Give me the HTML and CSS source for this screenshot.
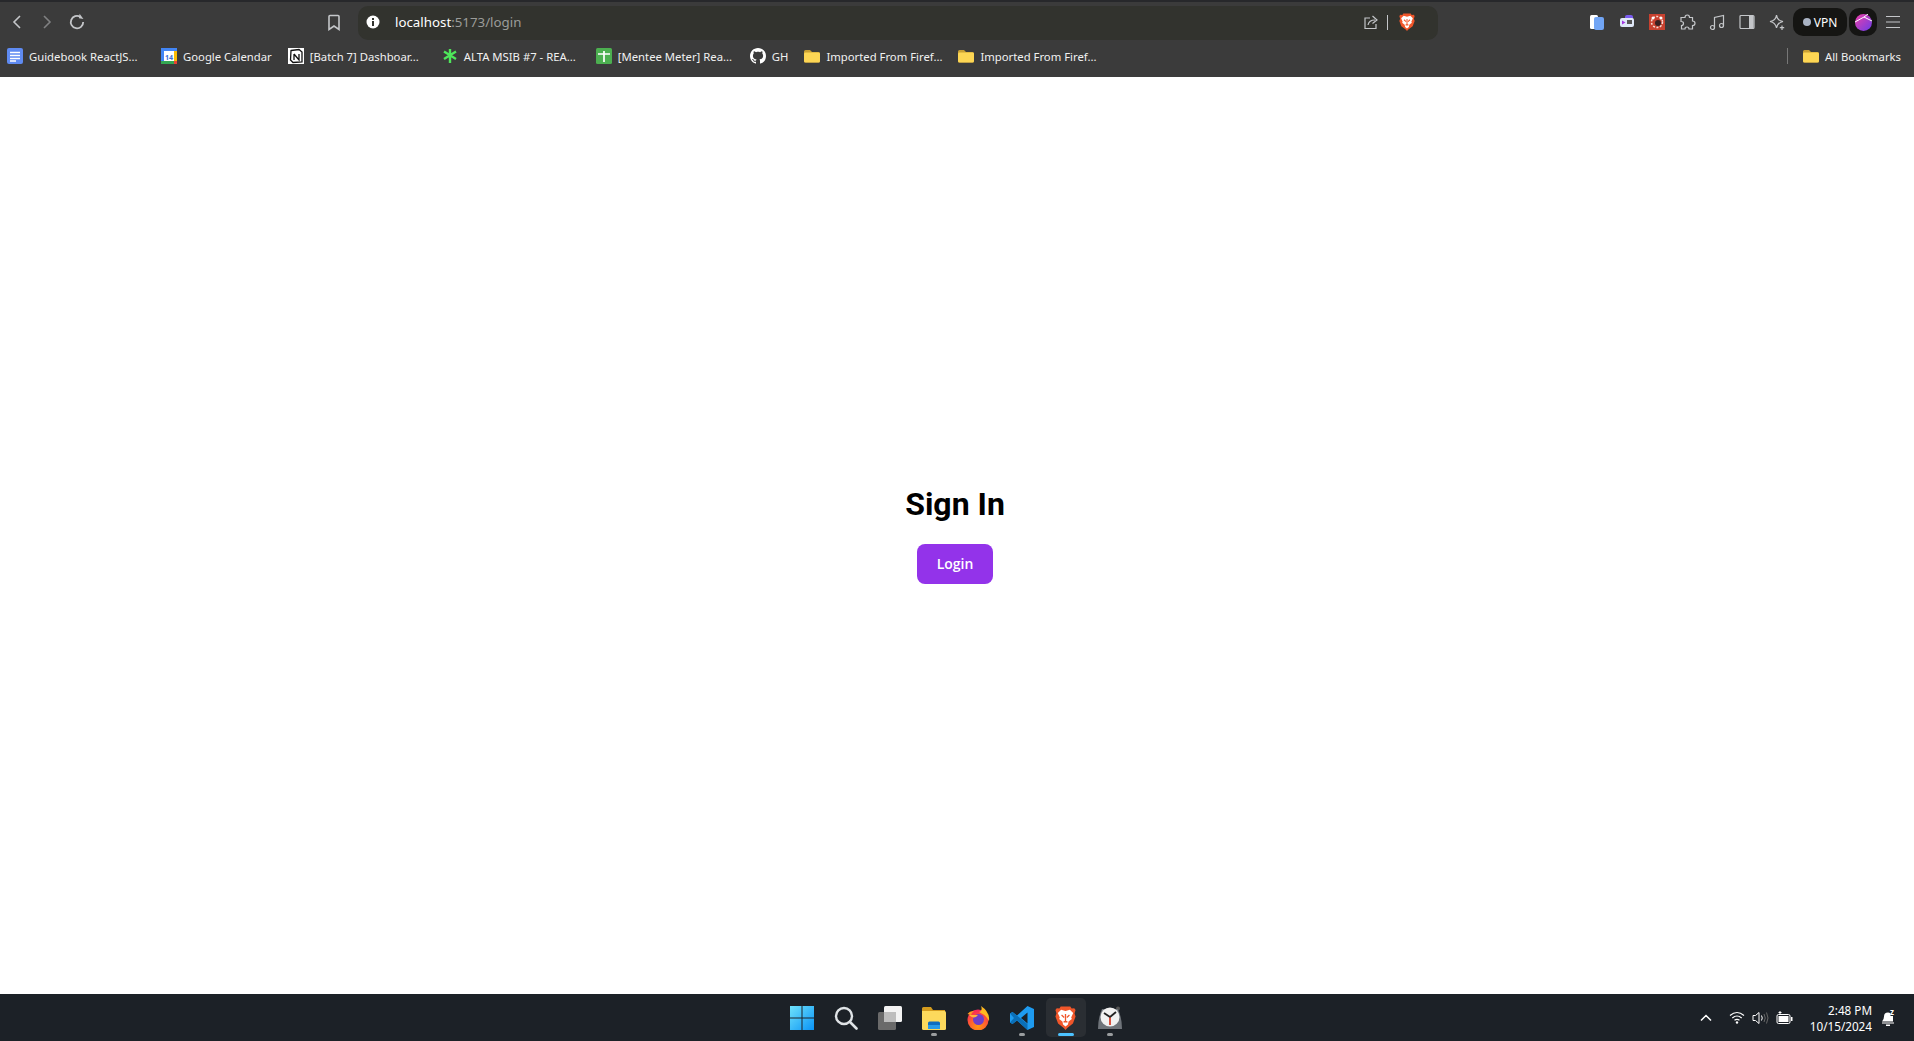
FILE: index.html
```html
<!DOCTYPE html>
<html>
<head>
	<meta charset="utf-8">
	<title>localhost:5173/login</title>
	<link rel="stylesheet" href="styles.css">
</head>
<body>

	<svg class="defs" width="0" height="0">
		<defs>
			<symbol id="folder" viewBox="0 0 16 16">
				<path d="M0 3.500Q0 2 1.500 2H6L8 4H14.500Q16 4 16 5.500V13Q16 14.500 14.500 14.500H1.500Q0 14.500 0 13Z" fill="#c9a033"/>
				<path d="M0 6Q0 4.600 1.500 4.600H14.500Q16 4.600 16 6V13Q16 14.500 14.500 14.500H1.500Q0 14.500 0 13Z" fill="#fdd654"/>
			</symbol>
			<symbol id="brave" viewBox="0 0 24 24" preserveAspectRatio="none">
				<path d="M6.500 .5H17.500L19 2.500L22 2.200L23.500 4L22.300 7.500L23.500 10.500L20.500 17.500L14 22L12 24L10 22L3.500 17.500L.5 10.500L1.700 7.500L.5 4L2 2.200L5 2.500Z" fill="#f0562a"/>
				<path d="M7 3.800L12 5L17 3.800L20.800 7L18.500 11.500L19.300 13L15.500 15.500L14.800 18.500L12 20.500L9.200 18.500L8.500 15.500L4.700 13L5.500 11.500L3.200 7Z" fill="#fff"/>
				<path d="M12 8V15.500M7.500 9L10.500 11.500M16.500 9L13.500 11.500M9.800 16L12 15.500L14.200 16" stroke="#f0562a" stroke-width="1.500" fill="none"/>
			</symbol>
		</defs>
	</svg>

	<header class="browser">
		<div class="toolbar">
			<button class="tool"><svg width="12" height="16" viewBox="0 0 12 16"><path d="M9 2L3 8L9 14" class="line"/></svg></button>
			<button class="tool dim"><svg width="12" height="16" viewBox="0 0 12 16"><path d="M3 2L9 8L3 14" class="line"/></svg></button>
			<button class="tool"><svg width="18" height="18" viewBox="0 0 16 16"><path d="M13.500 8A5.500 5.500 0 1 1 11 3.500" class="line"/><path d="M10 1V5H14Z" fill="#c4c6c9" transform="rotate(8 12 3)"/></svg></button>

			<button class="tool bookmark"><svg width="14" height="17" viewBox="0 0 14 17"><path d="M2 2.500Q2 1.500 3 1.500H11Q12 1.500 12 2.500V15.500L7 12L2 15.500Z" class="line"/></svg></button>

			<div class="omnibox">
				<svg class="info" width="14" height="14" viewBox="0 0 14 14"><circle cx="7" cy="7" r="6.500" fill="#fff"/><rect x="6" y="6" width="2" height="5" fill="#32332e"/><rect x="6" y="3" width="2" height="2" fill="#32332e"/></svg>
				<span class="url">localhost<span class="url-rest">:5173/login</span></span>
				<div class="omni-actions">
					<svg width="16" height="16" viewBox="0 0 16 16"><path d="M7 4H2V14.500H13V10" class="line thin"/><path d="M5 11Q6 6 12 6M9.500 2L14 6L9.500 9.500" class="line thin"/></svg>
					<span class="omni-sep"></span>
					<svg class="omni-brave" width="16" height="18"><use href="#brave" width="100%" height="100%"/></svg>
				</div>
			</div>

			<div class="extensions">
				<button class="tool ext"><svg width="16" height="16" viewBox="0 0 16 16"><rect x="1" y="1" width="8" height="14" rx="1.500" fill="#fff"/><rect x="5" y="3" width="10" height="13" rx="2" fill="#71a5f5"/></svg></button>
				<button class="tool ext"><svg width="16" height="16" viewBox="0 0 16 16"><rect x="6" y="1" width="8" height="10" rx="2" fill="#7a5bf0"/><rect x="1" y="4" width="14" height="9" rx="2" fill="#dfe8f8"/><path d="M3 6.500L6.500 8.500L3 10.500Z" fill="#a236e0"/><rect x="8" y="6" width="5" height="4" fill="#555"/></svg></button>
				<button class="tool ext"><svg width="16" height="16" viewBox="0 0 16 16"><rect width="16" height="16" fill="#c8412f"/><circle cx="8" cy="8" r="5.500" fill="none" stroke="#f6dcd6" stroke-width="1.500" stroke-dasharray="2 1.500"/><circle cx="9" cy="9" r="3" fill="#3a2020"/><circle cx="4" cy="4" r="1.500" fill="#fff"/><circle cx="12" cy="4" r="1.500" fill="#fff"/></svg></button>
				<button class="tool ext"><svg width="17" height="17" viewBox="0 0 17 17"><path d="M6 3.500Q6 1 8.300 1Q10.500 1 10.500 3.500H13.500V7Q16 7 16 9.200Q16 11.500 13.500 11.500V15H10Q10 13 8 13Q6 13 6 15H2.500V11.500Q4.500 11.500 4.500 9.500Q4.500 7.500 2 7.500V3.500Z" class="line thin"/></svg></button>
				<button class="tool ext"><svg width="16" height="17" viewBox="0 0 16 17"><path d="M5.500 13.500V3.500L14.500 1.500V11.500" class="line thin"/><circle cx="3.500" cy="13.500" r="2" class="line thin"/><circle cx="12.500" cy="11.500" r="2" class="line thin"/></svg></button>
				<button class="tool ext"><svg width="16" height="16" viewBox="0 0 16 16"><rect x="1" y="1.500" width="14" height="13" rx="1" class="line thin"/><rect x="10" y="2" width="4.500" height="12" fill="#c4c6c9"/></svg></button>
				<button class="tool ext"><svg width="16" height="17" viewBox="0 0 16 17"><path d="M7.500 1Q8 6.500 14 7.500Q8.500 8.500 7.500 14Q6.500 8.500 1 7.500Q7 6.500 7.500 1Z" class="line thin"/><path d="M13 11.500V16M10.800 13.700H15.200" class="line thin"/></svg></button>
				<div class="vpn"><span class="vpn-dot"></span>VPN</div>
				<div class="profile"><svg width="17" height="17" viewBox="0 0 17 17"><defs><linearGradient id="profile-fill" x1="0" y1="0" x2="1" y2="1"><stop offset="0" stop-color="#ef3fa8"/><stop offset="1" stop-color="#6a3de8"/></linearGradient></defs><circle cx="8.500" cy="8.500" r="8.500" fill="url(#profile-fill)"/><path d="M0 8L9 3L17 7M9 3L13 0" stroke="#fff" stroke-width="1" fill="none"/></svg></div>
				<button class="tool menu"><svg width="16" height="14" viewBox="0 0 16 14"><path d="M1 1.500H15M1 7H15M1 12.500H15" class="line thin"/></svg></button>
			</div>
		</div>

		<nav class="bookmarks">
			<a class="mark long">
				<svg width="16" height="16" viewBox="0 0 16 16"><rect width="16" height="16" rx="2" fill="#5f8bf2"/><path d="M3 4.500H13M3 7.500H13M3 10.500H13M3 13H9" stroke="#fff" stroke-width="1.300"/></svg>
				Guidebook ReactJS...
			</a>
			<a class="mark">
				<svg width="16" height="16" viewBox="0 0 16 16"><rect width="16" height="16" rx="1.500" fill="#fff"/><rect width="16" height="3" fill="#4285f4"/><rect width="3" height="16" fill="#4285f4"/><rect x="13" y="3" width="3" height="10" fill="#fbbc04"/><rect y="13" width="13" height="3" fill="#34a853"/><rect x="13" y="13" width="3" height="3" fill="#ea4335"/><text x="8" y="12" class="cal-day">14</text></svg>
				Google Calendar
			</a>
			<a class="mark long">
				<svg width="16" height="16" viewBox="0 0 16 16"><rect width="16" height="16" fill="#fff"/><path d="M3 2.500L11 1.500L14 4V14L5 14.500L2.500 12Z" fill="#fff" stroke="#111" stroke-width="1.300"/><path d="M6 6V12M6 6L11 12V6" stroke="#111" stroke-width="1.300" fill="none"/></svg>
				[Batch 7] Dashboar...
			</a>
			<a class="mark long">
				<svg width="16" height="16" viewBox="0 0 16 16"><path d="M8 1V15M2 3.500L14 11M14 3.500L2 11" stroke="#4ee65a" stroke-width="2.400"/></svg>
				ALTA MSIB #7 - REA...
			</a>
			<a class="mark long">
				<svg width="16" height="16" viewBox="0 0 16 16"><rect width="16" height="16" rx="1.500" fill="#4caf50"/><path d="M2 6H14M8 3V14" stroke="#fff" stroke-width="1.700"/></svg>
				[Mentee Meter] Rea...
			</a>
			<a class="mark">
				<svg width="16" height="16" viewBox="0 0 16 16"><path d="M8 0C3.580 0 0 3.580 0 8c0 3.540 2.290 6.530 5.470 7.590.4.070.55-.17.55-.38 0-.19-.01-.82-.01-1.490-2.010.37-2.530-.49-2.690-.94-.09-.23-.48-.94-.82-1.130-.28-.15-.68-.52-.01-.53.63-.01 1.080.58 1.230.82.720 1.210 1.870.87 2.330.66.070-.52.280-.87.510-1.070-1.780-.2-3.640-.89-3.640-3.950 0-.87.310-1.590.820-2.150-.08-.2-.36-1.020.08-2.120 0 0 .67-.21 2.200.82.640-.18 1.320-.27 2-.27s1.360.09 2 .27c1.530-1.040 2.200-.82 2.200-.82.440 1.100.16 1.920.08 2.120.51.560.82 1.270.82 2.150 0 3.070-1.870 3.750-3.650 3.950.29.250.54.730.54 1.480 0 1.070-.01 1.930-.01 2.200 0 .21.150.46.550.38A8.010 8.010 0 0 0 16 8c0-4.420-3.580-8-8-8z" fill="#fff"/></svg>
				GH
			</a>
			<a class="mark long">
				<svg width="16" height="16"><use href="#folder"/></svg>
				Imported From Firef...
			</a>
			<a class="mark long">
				<svg width="16" height="16"><use href="#folder"/></svg>
				Imported From Firef...
			</a>
			<div class="marks-end">
				<span class="marks-sep"></span>
				<a class="mark">
					<svg width="16" height="16"><use href="#folder"/></svg>
					All Bookmarks
				</a>
			</div>
		</nav>
	</header>

	<main class="page">
		<h1>Sign In</h1>
		<button class="login">Login</button>
	</main>

	<footer class="taskbar">
		<div class="task-apps">
			<div class="app">
				<svg width="24" height="24" viewBox="0 0 24 24"><defs><linearGradient id="win-fill" x1="0" y1="0" x2="1" y2="1"><stop offset="0" stop-color="#6fe2fb"/><stop offset="1" stop-color="#0a93f5"/></linearGradient></defs><path d="M0 0H11.500V11.500H0ZM12.500 0H24V11.500H12.500ZM0 12.500H11.500V24H0ZM12.500 12.500H24V24H12.500Z" fill="url(#win-fill)"/></svg>
			</div>
			<div class="app">
				<svg width="24" height="24" viewBox="0 0 24 24"><circle cx="10" cy="10" r="8" fill="none" stroke="#dfe3e6" stroke-width="2.400"/><path d="M16 16L22.500 22.500" stroke="#dfe3e6" stroke-width="2.600" stroke-linecap="round"/></svg>
			</div>
			<div class="app">
				<svg width="24" height="24" viewBox="0 0 24 24"><rect x="0" y="6" width="18" height="18" rx="1.500" fill="#6a6a6a"/><rect x="6" y="0" width="18" height="16" rx="1.500" fill="#f3f3f3"/><rect x="6" y="6" width="12" height="10" fill="#bdbdbd"/></svg>
			</div>
			<div class="app running">
				<svg width="24" height="24" viewBox="0 0 24 24"><path d="M0 2.500Q0 1 1.500 1H9L11 4H23V8H0Z" fill="#d49c1e"/><path d="M0 5H22.500Q24 5 24 6.500V22.500Q24 24 22.500 24H1.500Q0 24 0 22.500Z" fill="#fcd95c"/><path d="M6 23V17Q6 15.500 7.500 15.500H16.500Q18 15.500 18 17V23Z" fill="#0f6dc0"/><rect x="6" y="19" width="12" height="4" fill="#2a9be8"/></svg>
			</div>
			<div class="app">
				<svg width="24" height="24" viewBox="0 0 24 24"><defs><radialGradient id="fox-fill" cx="0.500" cy="0.800" r="0.900"><stop offset="0" stop-color="#ff980e"/><stop offset="0.500" stop-color="#ff5634"/><stop offset="1" stop-color="#f5156c"/></radialGradient></defs><circle cx="12" cy="14" r="10.500" fill="url(#fox-fill)"/><path d="M15 0Q24 6 23 15Q20 9 13 6Q17 5 15 0Z" fill="#ffb820"/><path d="M1.500 8Q4 4.500 8 5Q5 7.500 5 9Z" fill="#ff9a1f"/><circle cx="12.500" cy="13.500" r="5.500" fill="#6f3fc8"/><path d="M3 9H12L10 11Q6 12.500 3 9Z" fill="#ffb43c"/></svg>
			</div>
			<div class="app running">
				<svg width="24" height="24" viewBox="0 0 24 24"><path d="M17.500 0L24 3V21L17.500 24L7 14.500L2.500 18L0 16.500V7.500L2.500 6L7 9.500ZM17.500 6.500L11 12L17.500 17.500Z" fill="#1e9bf0" fill-rule="evenodd"/><path d="M0 7.500L2.500 6L17.500 18V24L7 14.500L2.500 18L0 16.500L4 12Z" fill="#0a6fb8"/></svg>
			</div>
			<div class="app active">
				<svg width="21" height="24"><use href="#brave" width="100%" height="100%"/></svg>
			</div>
			<div class="app running">
				<svg width="24" height="24" viewBox="0 0 24 24"><circle cx="20" cy="2.500" r="2" fill="#555"/><path d="M4 3H20Q24 12 24 23H0Q0 12 4 3Z" fill="#6f747a"/><circle cx="12" cy="11" r="9.500" fill="#f1f1f1"/><path d="M12 11V19" stroke="#d8402c" stroke-width="1.800"/><path d="M12 11L18 6M12 11L6 7" stroke="#222" stroke-width="1.800"/></svg>
			</div>
		</div>

		<div class="tray">
			<svg class="tray-chevron" width="12" height="8" viewBox="0 0 12 8"><path d="M1 6.500L6 1.500L11 6.500" fill="none" stroke="#fff" stroke-width="1.500"/></svg>
			<svg class="tray-wifi" width="16" height="13" viewBox="0 0 16 13"><path d="M1 4.500Q8 -1.500 15 4.500M3.300 7Q8 3 12.700 7M5.500 9.300Q8 7.300 10.500 9.300" fill="none" stroke="#fff" stroke-width="1.200"/><circle cx="8" cy="11.500" r="1.200" fill="#fff"/></svg>
			<svg class="tray-sound" width="18" height="14" viewBox="0 0 18 14"><path d="M1 4.500H3.500L7 1.500V12.500L3.500 9.500H1Z" fill="none" stroke="#fff" stroke-width="1"/><path d="M9.500 4.500Q11 7 9.500 9.500" fill="none" stroke="#fff"/><path d="M12 3Q14.500 7 12 11M14.500 1.500Q17.500 7 14.500 12.500" fill="none" stroke="#666"/></svg>
			<svg class="tray-battery" width="17" height="14" viewBox="0 0 17 14"><rect x="1" y="3.500" width="13" height="9" rx="1.500" fill="none" stroke="#fff"/><rect x="2.500" y="5" width="10" height="6" fill="#fff"/><rect x="15" y="6" width="1.500" height="4" fill="#fff"/><path d="M4 0V3M2.500 1.500H5.500" stroke="#fff"/></svg>
			<div class="clock"><span>2:48 PM</span><span>10/15/2024</span></div>
			<svg class="tray-bell" width="15" height="20" viewBox="0 -3 15 20"><path d="M1 12.500Q3 10.500 3 7.500Q3 3.500 7 3.500Q8.500 3.500 9.500 4.500V7H12V12.500Z" fill="#fff"/><path d="M1 13.500H13V14.500H1ZM5 15.500H9V17H5Z" fill="#fff"/><text x="9" y="6" class="bell-z">z</text></svg>
		</div>
	</footer>

</body>
</html>
```

FILE: styles.css
```css
* {
	box-sizing: border-box;
}

html, body {
	height: 100%;
}

body {
	margin: 0;
	display: flex;
	flex-direction: column;
	background-color: white;
	font-family: 'Noto Sans', 'Open Sans', sans-serif;
}

.defs {
	display: none;
}

/* Browser chrome */
.browser {
	flex: none;
	background-color: #3b3b3b;
	border-top: 2px solid #27282b;
}

.toolbar {
	height: 38px;
	display: flex;
	align-items: center;
	padding-top: 2px;
	padding-left: 2px;
}

.tool {
	width: 30px;
	height: 30px;
	border: 0;
	padding: 0;
	flex: none;
	display: flex;
	align-items: center;
	justify-content: center;
	background-color: transparent;
}

.tool.dim {
	opacity: .5;
}

.tool.bookmark {
	margin-left: 227px;
}

.line {
	fill: none;
	stroke: #c4c6c9;
	stroke-width: 1.6;
}

.line.thin {
	stroke-width: 1.2;
}

.omnibox {
	flex: none;
	width: 1080px;
	height: 34px;
	margin-top: 1px;
	margin-left: 9px;
	display: flex;
	align-items: center;
	padding: 0 16px 1px 7px;
	border-radius: 10px;
	background-color: #32332e;
}

.info {
	margin-left: 1px;
}

.url {
	color: white;
	font-size: 13.3px;
	margin-left: 15px;
}

.url-rest {
	color: #9b9c99;
}

.omni-actions {
	display: flex;
	align-items: center;
	margin-left: auto;
	margin-right: 7px;
	gap: 8px;
}

.omni-sep {
	width: 1px;
	height: 15px;
	background-color: #c4c6c9;
}

.omni-brave {
	margin-left: 3px;
}

.extensions {
	display: flex;
	align-items: center;
	margin-left: 144px;
}

.vpn {
	width: 54px;
	height: 28px;
	margin-left: 1px;
	display: flex;
	align-items: center;
	justify-content: center;
	gap: 3px;
	color: white;
	font-size: 12px;
	border-radius: 10px;
	background-color: #151513;
}

.vpn-dot {
	width: 8px;
	height: 8px;
	border-radius: 50%;
	background-color: #a9b3c4;
}

.profile {
	width: 28px;
	height: 28px;
	margin-left: 2px;
	display: flex;
	align-items: center;
	justify-content: center;
	border-radius: 10px;
	background-color: #151513;
}

.menu {
	margin-left: 1px;
}

.bookmarks {
	height: 37px;
	display: flex;
	align-items: center;
	gap: 16px;
	padding: 0 13px 5px 7px;
	color: #f1f1f1;
	font-size: 11.3px;
}

.mark {
	flex: none;
	display: flex;
	align-items: center;
	gap: 6px;
	white-space: nowrap;
}

.mark.long {
	width: 138px;
}

.mark svg {
	flex: none;
}

.cal-day {
	fill: #3c6fd8;
	font-size: 7px;
	font-weight: 700;
	text-anchor: middle;
}

.marks-end {
	display: flex;
	align-items: center;
	margin-left: auto;
}

.marks-sep {
	width: 1px;
	height: 16px;
	margin-right: 15px;
	background-color: #777;
}

/* Page */
.page {
	flex: 1;
	display: flex;
	flex-direction: column;
	align-items: center;
	justify-content: center;
	padding-right: 4px;
	padding-bottom: 4px;
}

.page h1 {
	margin: 0;
	color: black;
	font-family: Roboto, sans-serif;
	font-size: 32px;
	font-weight: 700;
	line-height: 40px;
}

.login {
	width: 76px;
	height: 40px;
	border: 0;
	margin-top: 20px;
	color: white;
	font-family: 'Open Sans', sans-serif;
	font-size: 14px;
	font-weight: 550;
	border-radius: 8px;
	background-color: #9333ea;
}

/* Windows taskbar */
.taskbar {
	flex: none;
	height: 47px;
	display: grid;
	grid-template-columns: 1fr auto 1fr;
	align-items: center;
	background-color: #1c2127;
}

.task-apps {
	grid-column: 2;
	display: flex;
	align-items: center;
	margin-right: 3px;
}

.app {
	width: 44px;
	height: 39px;
	display: flex;
	align-items: center;
	justify-content: center;
	position: relative;
	border-radius: 5px;
}

.app.running::after, .app.active::after {
	content: '';
	left: 50%;
	bottom: 1px;
	width: 6px;
	height: 3px;
	margin-left: -3px;
	position: absolute;
	border-radius: 2px;
	background-color: #9a9d9f;
}

.app.active {
	width: 40px;
	margin: 0 2px;
	background-color: #2a2e33;
}

.app.active::after {
	width: 16px;
	margin-left: -8px;
	background-color: #4cc2ff;
}

.tray {
	grid-column: 3;
	display: flex;
	align-items: center;
	justify-content: flex-end;
	padding-right: 18px;
	color: white;
}

.tray-wifi {
	margin-left: 17px;
}

.tray-sound {
	margin-left: 7px;
}

.tray-battery {
	margin-left: 6px;
}

.clock {
	width: 79px;
	display: flex;
	flex-direction: column;
	align-items: flex-end;
	font-size: 11.7px;
	line-height: 16px;
}

.tray-bell {
	margin-left: 9px;
	margin-bottom: 3px;
}

.bell-z {
	fill: white;
	font-size: 8px;
	font-weight: 700;
}
```
